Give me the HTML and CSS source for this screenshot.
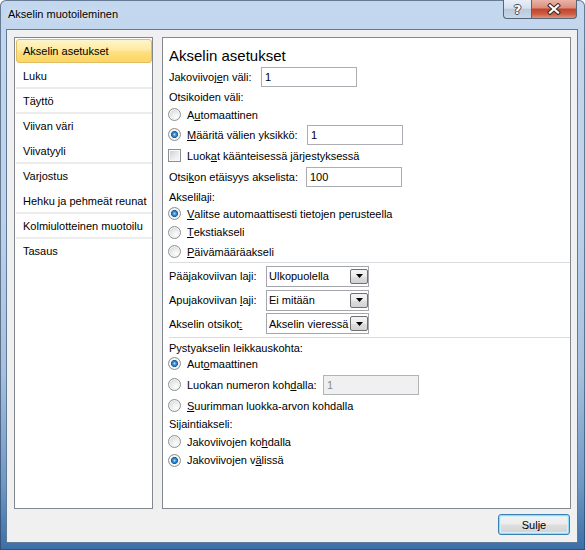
FILE: index.html
```html
<!DOCTYPE html>
<html lang="fi">
<head>
<meta charset="utf-8">
<title>Akselin muotoileminen</title>
<link rel="stylesheet" href="styles.css">
</head>
<body>
<div class="window">
  <div class="titlebar">
    <span class="title">Akselin muotoileminen</span>
    <div class="caption">
      <div class="cap-btn help"><span class="q">?</span></div>
      <div class="cap-btn close">
        <svg width="16" height="12" viewBox="0 0 16 12">
          <path d="M4 2.5 L12 9.5 M12 2.5 L4 9.5" stroke="#3f2a26" stroke-width="4.2" stroke-linecap="square" fill="none"/>
          <path d="M4 2.5 L12 9.5 M12 2.5 L4 9.5" stroke="#ffffff" stroke-width="2.2" stroke-linecap="square" fill="none"/>
        </svg>
      </div>
    </div>
  </div>
  <div class="client">
    <div class="panes">
      <ul class="nav">
        <li class="item active">Akselin asetukset</li>
        <li class="item">Luku</li>
        <li class="item grp">Täyttö</li>
        <li class="item grp">Viivan väri</li>
        <li class="item">Viivatyyli</li>
        <li class="item grp">Varjostus</li>
        <li class="item">Hehku ja pehmeät reunat</li>
        <li class="item grp">Kolmiulotteinen muotoilu</li>
        <li class="item grp">Tasaus</li>
      </ul>
      <div class="content">
        <h1 class="heading">Akselin asetukset</h1>
        <div class="row"><span class="w-jako">Jakoviivoj<u>e</u>n väli:</span><span class="field">1</span></div>
        <div class="row">Otsikoiden väli:</div>
        <div class="row"><span class="radio"></span>A<u>u</u>tomaattinen</div>
        <div class="row"><span class="radio on"></span><span class="w-maar"><u>M</u>ääritä välien yksikkö:</span><span class="field">1</span></div>
        <div class="row"><span class="check"></span>Luok<u>a</u>t käänteisessä järjestyksessä</div>
        <div class="row"><span class="w-otsk">Otsi<u>k</u>on etäisyys akselista:</span><span class="field">100</span></div>
        <div class="row">Akselilaji:</div>
        <div class="row"><span class="radio on"></span><u>V</u>alitse automaattisesti tietojen perusteella</div>
        <div class="row"><span class="radio"></span><u>T</u>ekstiakseli</div>
        <div class="row"><span class="radio"></span><u>P</u>äivämääräakseli</div>
        <div class="sep"></div>
        <div class="row sel"><span>Pää<u>j</u>akoviivan laji:</span><span class="select"><span>Ulkopuolella</span><span class="dd"><svg width="7" height="4" viewBox="0 0 7 4"><path d="M0 0H7L3.5 4Z" fill="#000"/></svg></span></span></div>
        <div class="row sel"><span>Apujakoviivan <u>l</u>aji:</span><span class="select"><span>Ei mitään</span><span class="dd"><svg width="7" height="4" viewBox="0 0 7 4"><path d="M0 0H7L3.5 4Z" fill="#000"/></svg></span></span></div>
        <div class="row sel"><span>Akselin otsikot<u>:</u></span><span class="select"><span>Akselin vieressä</span><span class="dd"><svg width="7" height="4" viewBox="0 0 7 4"><path d="M0 0H7L3.5 4Z" fill="#000"/></svg></span></span></div>
        <div class="sep b"></div>
        <div class="row">Pystyakselin leikkauskohta:</div>
        <div class="row"><span class="radio on"></span>Aut<u>o</u>maattinen</div>
        <div class="row"><span class="radio"></span><span class="w-luok">Luokan numeron koh<u>d</u>alla:</span><span class="field off">1</span></div>
        <div class="row"><span class="radio"></span><u>S</u>uurimman luokka-arvon kohdalla</div>
        <div class="row">Sijaintiakseli:</div>
        <div class="row"><span class="radio"></span>Jakoviivojen ko<u>h</u>dalla</div>
        <div class="row"><span class="radio on"></span>Jakoviivojen v<u>ä</u>lissä</div>
      </div>
    </div>
    <div class="footer"><button class="btn" type="button">Sulje</button></div>
  </div>
</div>
</body>
</html>
```
FILE: styles.css
```css
* { box-sizing: border-box; }
html, body { margin: 0; padding: 0; }
body {
  width: 585px;
  height: 550px;
  overflow: hidden;
  font-family: "Liberation Sans", Arial, sans-serif;
  font-size: 11px;
  color: #000;
  background: #ffffff;
}
.window {
  width: 585px;
  height: 550px;
  display: flex;
  flex-direction: column;
  padding: 0 7px 7px 6px;
  border-radius: 6px 6px 0 0;
  background: linear-gradient(180deg, #c3d7ee 0%, #bdd2ea 40%, #a6c0dd 68%, #6f98c5 88%, #3c6ea6 100%);
  box-shadow: inset 0 0 0 1px rgba(40, 60, 90, 0.6);
}
.titlebar {
  height: 29px;
  flex: none;
  display: flex;
  justify-content: space-between;
  align-items: flex-start;
}
.title {
  padding: 8px 0 0 2px;
  line-height: 13px;
  text-shadow: 0 0 6px rgba(255, 255, 255, 0.9);
}
.caption { display: flex; margin-right: 1px; }
.cap-btn {
  height: 19px;
  display: flex;
  align-items: center;
  justify-content: center;
  border: 1px solid #56667a;
  border-top: none;
}
.help {
  width: 28px;
  border-right: none;
  border-radius: 0 0 0 4px;
  background: linear-gradient(#e8eef6 0%, #d6e1ed 45%, #b9cadd 52%, #c9d8e8 100%);
}
.close {
  width: 46px;
  border-radius: 0 0 4px 0;
  background: linear-gradient(#ebb4a7 0%, #d9907f 42%, #c4442b 52%, #cd5d44 78%, #e0937c 100%);
}
.q {
  color: #fff;
  font: bold 13px "DejaVu Sans", sans-serif;
  line-height: 13px;
  text-shadow: 1px 0 #3d4b5b, -1px 0 #3d4b5b, 0 1px #3d4b5b, 0 -1px #3d4b5b;
}
.client {
  flex: none;
  height: 514px;
  display: flex;
  flex-direction: column;
  background: #f0f0f0;
  border: 1px solid #5f7a99;
  padding: 7px 6px 7px 7px;
}
.panes {
  display: flex;
  gap: 9px;
  height: 472px;
  flex: none;
}
.nav {
  width: 139px;
  margin: 0;
  padding: 1px 0 0 1px;
  list-style: none;
  background: #fff;
  border: 1px solid #828790;
}
.item {
  height: 24px;
  margin-bottom: 1px;
  padding: 0 6px;
  border: 1px solid transparent;
  display: flex;
  align-items: center;
  white-space: nowrap;
}
.item.grp { box-shadow: 0 -2px 0 #ececec; }
.item.active {
  border-color: #e2bd63;
  border-radius: 3px;
  background: linear-gradient(#fff5cc 0%, #feeaa2 45%, #fddf80 55%, #fcd663 100%);
}
.content {
  width: 409px;
  background: #fff;
  border: 1px solid #828790;
  padding-left: 6px;
  display: grid;
  grid-template-rows: 28px 21px 19px 17px 23px 19px 23px 17px 17px 20px 19px 3px 24px 24px 23px 4px 17px 15px 27px 15px 22px 13px 24px;
  align-content: start;
}
.heading {
  margin: 0;
  padding-top: 9px;
  font-size: 15px;
  font-weight: normal;
  line-height: 17px;
}
.row {
  display: flex;
  align-items: center;
  white-space: nowrap;
}
.row.sel {
  display: grid;
  grid-template-columns: 97px 103px;
  align-items: center;
}
u { text-underline-offset: 1px; }
.w-jako { width: 92px; flex: none; }
.w-maar { width: 120px; flex: none; }
.w-otsk { width: 137px; flex: none; }
.w-luok { width: 136px; flex: none; }
.field {
  width: 96px;
  height: 20px;
  flex: none;
  border: 1px solid #abadb3;
  background: #fff;
  padding-left: 3px;
  display: flex;
  align-items: center;
}
.field.off {
  background: #f0f0f0;
  color: #8a8a8a;
  border-color: #b0b4b8;
}
.select {
  width: 103px;
  height: 21px;
  border: 1px solid #a3a6ab;
  background: #fff;
  padding-left: 2px;
  display: flex;
  align-items: center;
  justify-content: space-between;
}
.dd {
  width: 18px;
  height: 15px;
  flex: none;
  border: 1px solid #707070;
  border-radius: 2px;
  background: linear-gradient(#f4f4f4 0%, #ebebeb 50%, #dedede 51%, #d2d2d2 100%);
  display: flex;
  align-items: center;
  justify-content: center;
}
.sep {
  height: 1px;
  margin-top: 1px;
  background: #d9dcdf;
}
.sep.b { margin-top: 2px; }
.radio {
  width: 13px;
  height: 13px;
  flex: none;
  margin: 0 6px 0 -1px;
  border-radius: 50%;
  border: 1px solid #8e8f8f;
  background: radial-gradient(circle at 65% 70%, #fcfcfc 0%, #efefef 35%, #d6d6d6 80%, #cacaca 100%);
  box-shadow: inset 0 0 0 1px #f6f6f6;
}
.radio.on {
  background: radial-gradient(circle at 50% 50%, #a9e3ff 0, #3f97d8 1.5px, #1a5c98 3.3px, #fafafa 3.8px, #f2f2f2 4.4px, #d0d0d0 5.5px);
}
.check {
  width: 13px;
  height: 13px;
  flex: none;
  margin: 0 6px 0 -1px;
  border: 1px solid #8e8f8f;
  background: linear-gradient(135deg, #c8ccd1 0%, #e9ebed 55%, #fbfbfb 100%);
  box-shadow: inset 0 0 0 1px #f8f8f8;
}
.footer {
  display: flex;
  justify-content: flex-end;
  margin-top: 5px;
  padding-right: 1px;
}
.btn {
  width: 72px;
  height: 21px;
  padding: 0;
  font: inherit;
  color: #000;
  border: 1px solid #3c7fb1;
  border-radius: 3px;
  background: linear-gradient(#f3f3f3 0%, #ececec 48%, #dedede 52%, #d2d2d2 100%);
  box-shadow: inset 0 0 0 1px #8fdcf8, inset 0 0 0 2px #d2f1fb;
}
```
